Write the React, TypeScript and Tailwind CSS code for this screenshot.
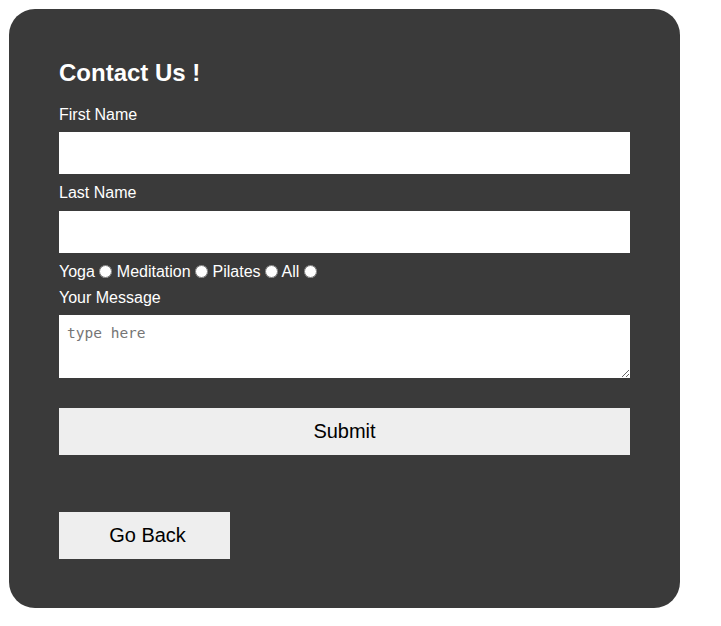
export default function App() {
  return (
    <div className="min-h-screen bg-white font-['Liberation_Sans',Arial,sans-serif]">
      <div className="ml-[9px] mt-[9px] w-[671px] rounded-[26px] bg-[#3a3a3a] px-[50px] pb-[49px] pt-[50px] text-white">
        <h2 className="text-[24px] font-bold leading-[28px]">Contact Us !</h2>
        <form className="mt-[19px]" onSubmit={(e) => e.preventDefault()}>
          <label className="block text-[16px] leading-[18px]">First Name</label>
          <input type="text" className="mb-[10px] mt-[8px] block h-[42px] w-full bg-white text-black outline-none" />
          <label className="block text-[16px] leading-[18px]">Last Name</label>
          <input type="text" className="mb-[10px] mt-[9px] block h-[42px] w-full bg-white text-black outline-none" />
          <div className="h-[18px] text-[16px] leading-[18px]">
            Yoga <input type="radio" name="activity" className="m-0 h-[13px] w-[13px] align-[-1px]" />{" "}
            Meditation <input type="radio" name="activity" className="m-0 h-[13px] w-[13px] align-[-1px]" />{" "}
            Pilates <input type="radio" name="activity" className="m-0 h-[13px] w-[13px] align-[-1px]" />{" "}
            All <input type="radio" name="activity" className="m-0 h-[13px] w-[13px] align-[-1px]" />
          </div>
          <label className="mt-[8px] block text-[16px] leading-[18px]">Your Message</label>
          <textarea
            placeholder="type here"
            className="mt-[8px] block h-[63px] w-full bg-white px-[8px] py-[8px] font-['DejaVu_Sans_Mono',monospace] text-[14.5px] text-black outline-none placeholder:text-[#757575]"
          />
          <button type="submit" className="mt-[30px] block h-[47px] w-full bg-[#eeeeee] pb-[2px] text-[20px] leading-[22px] text-black">
            Submit
          </button>
        </form>
        <button className="mt-[57px] block h-[47px] w-[171px] bg-[#eeeeee] pb-[2px] pl-[6px] text-[20px] leading-[22px] text-black">
          Go Back
        </button>
      </div>
    </div>
  );
}
